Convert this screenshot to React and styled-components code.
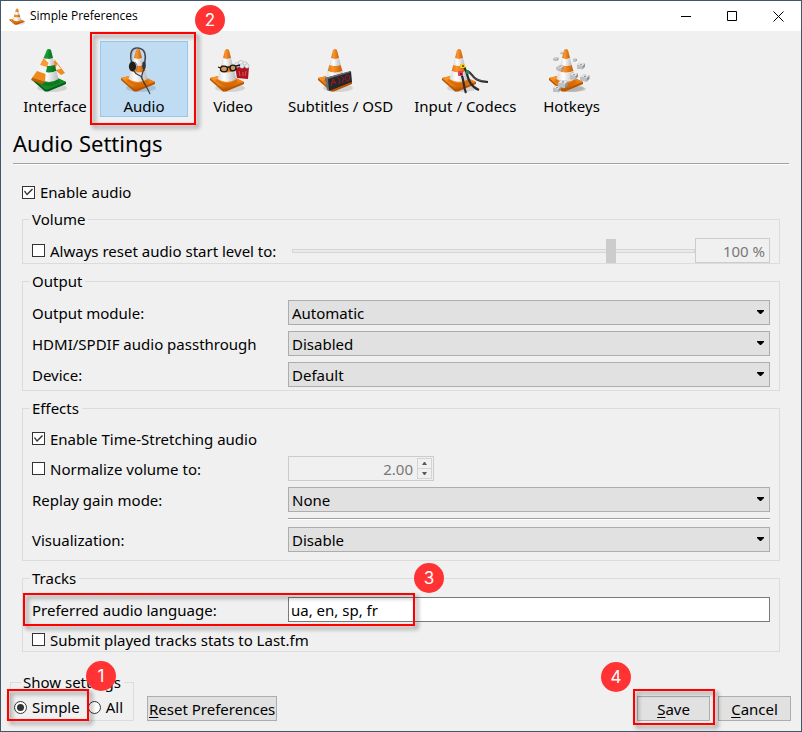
import { useState } from "react";
import styled, { createGlobalStyle } from "styled-components";

const TABS = [
  { id: "interface", label: "Interface" },
  { id: "audio", label: "Audio" },
  { id: "video", label: "Video" },
  { id: "subtitles", label: "Subtitles / OSD" },
  { id: "codecs", label: "Input / Codecs" },
  { id: "hotkeys", label: "Hotkeys" },
];

const OUTPUT_FIELDS = [
  { id: "module", label: "Output module:", value: "Automatic" },
  { id: "passthrough", label: "HDMI/SPDIF audio passthrough", value: "Disabled" },
  { id: "device", label: "Device:", value: "Default" },
];

// centre x, centre y, width
const KEYCAPS = [
  [14, 7, 3],
  [8, 13, 5],
  [27, 14, 4],
  [12, 22, 7],
  [33, 20, 8],
  [26, 30, 8],
  [37, 32, 9],
  [9, 43, 8],
  [15, 38, 10],
];

const ConeDefs = () => (
  <svg width="0" height="0" style={{ position: "absolute" }} aria-hidden="true">
    <defs>
      <linearGradient id="orange">
        <stop offset="0" stopColor="#e07a14" />
        <stop offset="0.35" stopColor="#fb9430" />
        <stop offset="1" stopColor="#c95c00" />
      </linearGradient>
      <linearGradient id="white">
        <stop offset="0" stopColor="#d8d8d8" />
        <stop offset="0.35" stopColor="#ffffff" />
        <stop offset="1" stopColor="#b9b9bd" />
      </linearGradient>
      <linearGradient id="base" x2="0.3" y2="1">
        <stop offset="0" stopColor="#ff9f30" />
        <stop offset="0.7" stopColor="#f08010" />
        <stop offset="1" stopColor="#c25a00" />
      </linearGradient>
      <linearGradient id="green">
        <stop offset="0" stopColor="#1fa03a" />
        <stop offset="1" stopColor="#04701c" />
      </linearGradient>
    </defs>
  </svg>
);

const Cone = ({ body = "url(#orange)", base = "url(#base)", edge = "#b85400" }) => (
  <g>
    <ellipse cx="21" cy="42" rx="15" ry="4" fill="#000" opacity="0.12" />
    <path d="M1 32L18 28L35 36L35 38L17 45.500L14 45.500L1 34Z" fill={edge} />
    <path d="M1 32L18 28L35 36L17 43.500L14 43.500Z" fill={base} />
    <path d="M8 33Q18 41 27 33L29 36Q18 44 6 35Z" fill={edge} opacity="0.4" />
    <path d="M16 4Q18 2 20 4L22 12Q18 14 14 12Z" fill={body} />
    <path d="M14 12Q18 14 22 12L23.700 19Q18 21 12.300 19Z" fill="url(#white)" />
    <path d="M12.300 19Q18 21 23.700 19L25.400 25Q18 28.500 10.600 25Z" fill={body} />
    <path d="M10.600 25Q18 28.500 25.400 25L27.500 33Q18 39 8.500 33Z" fill="url(#white)" />
  </g>
);

const AppIcon = () => (
  <svg width="16" height="17" viewBox="0 2 36 44" preserveAspectRatio="none" aria-hidden="true">
    <Cone />
  </svg>
);

const TabArt = ({ id }) => {
  if (id === "interface") {
    return (
      <>
        <path d="M24 14L34 27L30 29L20 20Z" fill="#f08a1c" />
        <path d="M26 18L30 23L24 24Z" fill="#eee" />
        <Cone body="url(#green)" base="#128a28" edge="#055c14" />
        <path d="M16 4Q17 3 18 3L15.500 13L12.500 12Z" fill="#1a9a35" />
        <path d="M12.500 12L17.500 17L15.500 22L9 19Z" fill="#fb9a35" />
        <path d="M9 19L16 21L14.500 28L6 25Z" fill="#f4f4f4" />
        <path d="M6 25L14.500 28L14 36L1 32Z" fill="#f08a1c" />
        <path d="M1 32L14 36L11 38L0 34Z" fill="#c95c00" />
      </>
    );
  }
  if (id === "audio") {
    return (
      <>
        <Cone />
        <path
          d="M12 18C9 6 12 2 17 2S28 5 24 19"
          fill="none"
          stroke="#41474d"
          strokeWidth="1.600"
        />
        <path d="M12 14C11 6 14 3 18 3" fill="none" stroke="#9aa0a6" strokeWidth="0.700" />
        <path d="M15 16Q19 20 16 25" fill="none" stroke="#777" />
        <ellipse cx="12.500" cy="20.500" rx="3.600" ry="5" fill="#1e1e1e" />
        <ellipse cx="24" cy="19.500" rx="1.800" ry="4" fill="#32363c" />
        <path
          d="M14 25C16 30 21 28 22 32S28 43 30 48M24 23Q21 30 22 33"
          fill="none"
          stroke="#35393e"
          strokeWidth="1.200"
        />
      </>
    );
  }
  if (id === "video") {
    return (
      <>
        <path d="M26 20L40 21L39 33L28 32Z" fill="#b1121d" />
        <path d="M30 25L31 30M34 26L34 30M37 25L36 30" stroke="#c9747b" strokeWidth="0.800" />
        <g fill="#e9eef2" stroke="#9aa5ad" strokeWidth="0.500">
          <circle cx="28" cy="19" r="2.500" />
          <circle cx="32" cy="17" r="2.600" />
          <circle cx="36" cy="18" r="2.400" />
          <circle cx="38" cy="20" r="2.200" />
          <circle cx="33" cy="20" r="2.200" />
        </g>
        <Cone />
        <g fill="#c99a63" stroke="#161616" strokeWidth="1.300">
          <ellipse cx="15" cy="23" rx="3.500" ry="2.800" />
          <ellipse cx="24" cy="22" rx="3" ry="2.800" />
          <path d="M18.500 22Q20 20 21 21.500M27 20L31 19M11.500 22L9 21" fill="none" />
        </g>
      </>
    );
  }
  if (id === "subtitles") {
    return (
      <>
        <Cone />
        <path d="M8 32L34 25L35 36L12 45Z" fill="#25272b" />
        <path d="M8 32L34 25L34 26L11 33L12 45L10 44Z" fill="#6b6e73" />
        <g fill="none" stroke="#b31420" strokeWidth="0.900">
          <path d="M14 40L16 33L19 38M15 37L18 36" />
          <path d="M20 31L23 34L22 38M24 30L27 33L25 37" />
          <ellipse cx="30.500" cy="32" rx="2" ry="3.200" />
        </g>
      </>
    );
  }
  if (id === "codecs") {
    return (
      <>
        <Cone />
        <g fill="none" stroke="#2b2b2b" strokeWidth="2.200">
          <path d="M22 20C28 25 24 38 38 44" />
          <path d="M20 28C23 32 22 40 25 47" />
          <path d="M26 25C33 27 29 35 47 36" />
        </g>
        <path d="M27 26C32 28 30 34 44 35" fill="none" stroke="#777" strokeWidth="0.600" />
        <rect x="19" y="18" width="5" height="4" rx="1" fill="#f1cf12" />
        <rect x="21" y="19" width="2" height="2" fill="#7a6500" />
        <rect x="17" y="25" width="5" height="5" rx="1" fill="#e33f67" />
        <rect x="19" y="27" width="2" height="2" fill="#7d1631" />
        <rect x="25" y="24" width="3" height="4" rx="1" fill="#1c8f4a" />
      </>
    );
  }
  return (
    <>
      <ellipse cx="24" cy="43" rx="14" ry="3" fill="#000" opacity="0.15" />
      <Cone />
      {KEYCAPS.map(([x, y, size]) => (
        <g
          key={`${x}-${y}`}
          transform={`translate(${x} ${y}) scale(${size / 10}) translate(-5 -4)`}
        >
          <path d="M0 3L3 0L10 1L10 5L7 8L0 7Z" fill="#8f9396" />
          <path d="M0 3L3 0L10 1L7 4Z" fill="#e6e7e8" />
          <path d="M0 3L7 4L7 8L0 7Z" fill="#bfc2c4" />
          <path d="M4 1.500L6 1.500L6 2.500L4 2.500Z" fill="#73777a" />
        </g>
      ))}
    </>
  );
};

const Dropdown = ({ id, value }) => (
  <SelectBox>
    <Select id={id} defaultValue={value}>
      <option>{value}</option>
    </Select>
    <Caret width="7" height="4" viewBox="0 0 7 4" aria-hidden="true">
      <path d="M0 0H7V1L4 4H3L0 1Z" fill="#000" />
    </Caret>
  </SelectBox>
);

const App = () => {
  const [tab, setTab] = useState("audio");

  return (
    <>
      <GlobalStyle />
      <ConeDefs />
      <Window>
        <TitleBar>
          <AppIcon />
          <Title>Simple Preferences</Title>
          <WindowButton aria-label="Minimize">
            <svg width="11" height="11" stroke="#000">
              <path d="M0 5.500H10" />
            </svg>
          </WindowButton>
          <WindowButton aria-label="Maximize">
            <svg width="11" height="11" stroke="#000" fill="none">
              <path d="M0.500 0.500H9.500V9.500H0.500Z" />
            </svg>
          </WindowButton>
          <WindowButton aria-label="Close">
            <svg width="11" height="11" stroke="#000">
              <path d="M0.500 0.500L10.500 10.500M10.500 0.500L0.500 10.500" />
            </svg>
          </WindowButton>
        </TitleBar>

        <Toolbar>
          {TABS.map(({ id, label }) => (
            <TabSlot key={id}>
              <TabButton $active={tab === id} onClick={() => setTab(id)}>
                <TabIcon width="48" height="48" viewBox="0 0 48 48" aria-hidden="true">
                  <TabArt id={id} />
                </TabIcon>
                {label}
              </TabButton>
              {id === "audio" && (
                <>
                  <TabMark />
                  <Badge $left="95px" $top="-36px">
                    2
                  </Badge>
                </>
              )}
            </TabSlot>
          ))}
        </Toolbar>

        <Heading>Audio Settings</Heading>

        <Panel>
          <CheckLabel>
            <Checkbox type="checkbox" defaultChecked />
            Enable audio
          </CheckLabel>

          <Group>
            <Legend>Volume</Legend>
            <Row>
              <CheckLabel>
                <Checkbox type="checkbox" />
                Always reset audio start level to:
              </CheckLabel>
              <VolumeControls>
                <Slider
                  type="range"
                  min="0"
                  max="125"
                  defaultValue="100"
                  aria-label="Start level"
                  disabled
                />
                <VolumeInput defaultValue="100 %" aria-label="Start level percent" disabled />
              </VolumeControls>
            </Row>
          </Group>

          <Group $bottom="3px">
            <Legend>Output</Legend>
            {OUTPUT_FIELDS.map(({ id, label, value }) => (
              <Row key={id}>
                <label htmlFor={id}>{label}</label>
                <Dropdown id={id} value={value} />
              </Row>
            ))}
          </Group>

          <Group $bottom="8px">
            <Legend>Effects</Legend>
            <CheckRow>
              <CheckLabel>
                <Checkbox type="checkbox" defaultChecked />
                Enable Time-Stretching audio
              </CheckLabel>
            </CheckRow>
            <Row>
              <CheckLabel>
                <Checkbox type="checkbox" />
                Normalize volume to:
              </CheckLabel>
              <SpinBox>
                <SpinInput defaultValue="2.00" aria-label="Normalize volume" disabled />
                <Stepper>
                  <StepButton aria-label="Increase" disabled>
                    <svg width="5" height="3" viewBox="0 0 5 3">
                      <path d="M0 3L2 0H3L5 3Z" fill="#5a5a5a" />
                    </svg>
                  </StepButton>
                  <StepButton aria-label="Decrease" disabled>
                    <svg width="5" height="3" viewBox="0 0 5 3">
                      <path d="M0 0L2 3H3L5 0Z" fill="#5a5a5a" />
                    </svg>
                  </StepButton>
                </Stepper>
              </SpinBox>
            </Row>
            <Row>
              <label htmlFor="gain">Replay gain mode:</label>
              <Dropdown id="gain" value="None" />
            </Row>
            <Divider />
            <Row>
              <label htmlFor="visualization">Visualization:</label>
              <Dropdown id="visualization" value="Disable" />
            </Row>
          </Group>

          <Group>
            <Legend>Tracks</Legend>
            <Row>
              <label htmlFor="language">Preferred audio language:</label>
              <TextInput id="language" defaultValue="ua, en, sp, fr" />
              <LanguageMark />
              <Badge $left="382px" $top="-34px">
                3
              </Badge>
            </Row>
            <CheckRow>
              <CheckLabel>
                <Checkbox type="checkbox" />
                Submit played tracks stats to Last.fm
              </CheckLabel>
            </CheckRow>
          </Group>
        </Panel>

        <Footer>
          <ModeGroup>
            <ModeLegend>Show settings</ModeLegend>
            <ModeRow>
              <CheckLabel>
                <Radio type="radio" name="mode" defaultChecked />
                Simple
              </CheckLabel>
              <CheckLabel>
                <Radio type="radio" name="mode" />
                All
              </CheckLabel>
            </ModeRow>
            <ModeMark />
            <Badge $left="75px" $top="-31px">
              1
            </Badge>
          </ModeGroup>
          <PushButton>
            <u>R</u>eset Preferences
          </PushButton>
          <Actions>
            <SaveSlot>
              <PushButton $wide>
                <u>S</u>ave
              </PushButton>
              <SaveMark />
              <Badge $left="-36px" $top="-34px">
                4
              </Badge>
            </SaveSlot>
            <PushButton $wide>
              <u>C</u>ancel
            </PushButton>
          </Actions>
        </Footer>
      </Window>
    </>
  );
};

export default App;

const GlobalStyle = createGlobalStyle`
  * {
    box-sizing: border-box;
  }

  body {
    margin: 0;

    background-color: #f0f0f0;

    color: #000;
    font-family: "Noto Sans", "Open Sans", sans-serif;
    font-size: 15px;
    line-height: 20px;
  }

  button,
  input,
  select {
    margin: 0;

    color: inherit;
    font: inherit;
  }

  svg {
    display: block;
  }
`;

const Window = styled.main`
  display: flex;
  flex-direction: column;

  min-height: 100vh;

  border: 1px solid #43576b;
`;

const TitleBar = styled.header`
  display: flex;
  align-items: center;

  height: 30px;
  padding-left: 8px;

  background-color: white;
`;

const Title = styled.span`
  flex: 1;

  margin-left: 5px;

  font-family: "Open Sans", "Noto Sans", sans-serif;
  font-size: 12px;
  line-height: 18px;
`;

const WindowButton = styled.button`
  display: flex;
  align-items: center;
  justify-content: center;

  width: 46px;
  height: 30px;
  padding: 0;

  border: none;
  background-color: transparent;

  &:hover {
    background-color: #e5e5e5;
  }
`;

const Toolbar = styled.nav`
  display: flex;
  column-gap: 1px;

  padding: 10px 10px 0;
`;

const TabSlot = styled.div`
  position: relative;
`;

const TabButton = styled.button`
  display: flex;
  flex-direction: column;
  align-items: center;

  min-width: 88px;
  height: 76px;
  padding: 4px 9px 0;

  border: 1px solid ${({ $active }) => ($active ? "#90c8f6" : "transparent")};
  background-color: ${({ $active }) => ($active ? "#c0dcf3" : "transparent")};

  white-space: nowrap;
`;

const TabIcon = styled.svg`
  flex-shrink: 0;

  margin-bottom: 2px;

  overflow: visible;
`;

const Mark = styled.span`
  position: absolute;
  z-index: 1;

  border: 2px solid #fe0000;
  filter: drop-shadow(3px 3px 2px rgba(0, 0, 0, 0.45));

  pointer-events: none;
`;

const TabMark = styled(Mark)`
  inset: -9px -8px -8px -10px;
`;

const LanguageMark = styled(Mark)`
  top: -4px;
  left: -9px;

  width: 392px;
  height: 33px;
`;

const ModeMark = styled(Mark)`
  bottom: -1px;
  left: -4px;

  width: 82px;
  height: 32px;
`;

const SaveMark = styled(Mark)`
  inset: -7px -5px -4px -4px;
`;

const Badge = styled.span`
  display: flex;
  align-items: center;
  justify-content: center;

  position: absolute;
  top: ${({ $top }) => $top};
  left: ${({ $left }) => $left};
  z-index: 2;

  width: 30px;
  height: 30px;

  border-radius: 50%;
  background-color: #ff3333;

  color: white;
  font-family: Inter, sans-serif;
  font-size: 17px;
`;

const Heading = styled.h1`
  margin: 12px 12px 0;
  padding-bottom: 6px;

  border-bottom: 1px solid #a0a0a0;
  box-shadow: 0 1px 0 white;

  font-size: 22px;
  font-weight: 400;
  line-height: 28px;
`;

const Panel = styled.section`
  display: flex;
  flex-direction: column;
  row-gap: 7px;

  margin: 18px 21px 16px;
`;

const Group = styled.fieldset`
  display: grid;
  row-gap: 6px;

  min-width: 0;
  margin: 0;
  padding: 9px 9px ${({ $bottom }) => $bottom || "0"};

  border: 1px solid #dcdcdc;
`;

const Legend = styled.legend`
  height: 20px;
  padding: 0 3px 0 2px;
  margin-left: -2px;
`;

const Row = styled.div`
  display: grid;
  grid-template-columns: 256px minmax(0, 1fr);
  align-items: center;

  position: relative;

  height: 25px;
`;

const CheckRow = styled.div`
  display: flex;
  align-items: center;

  height: 23px;
`;

const CheckLabel = styled.label`
  display: flex;
  align-items: center;
  column-gap: 5px;

  white-space: nowrap;
`;

const Checkbox = styled.input`
  flex-shrink: 0;

  width: 13px;
  height: 13px;

  appearance: none;
  border: 1px solid #333;
  background-color: white;

  &:checked::before {
    content: "";
    display: block;

    width: 11px;
    height: 11px;

    background-color: #333;
    clip-path: polygon(1px 5px, 2px 4px, 4px 7px, 9px 2px, 10px 3px, 4px 9px);
  }
`;

const Radio = styled(Checkbox)`
  border-radius: 50%;

  &:checked::before {
    width: 7px;
    height: 7px;
    margin: 2px;

    border-radius: 50%;
    clip-path: none;
  }
`;

const VolumeControls = styled.div`
  display: flex;

  padding-left: 4px;
`;

const Slider = styled.input`
  flex: 1;

  min-width: 0;
  height: 25px;

  appearance: none;
  background-color: transparent;

  &::-webkit-slider-runnable-track {
    height: 4px;

    border: 1px solid #d6d6d6;
    background-color: #e7eaea;
  }

  &::-webkit-slider-thumb {
    width: 10px;
    height: 24px;
    margin-top: -11px;

    appearance: none;
    background-color: #cccccc;
  }
`;

const TextInput = styled.input`
  width: 100%;
  min-width: 0;
  height: 25px;
  padding: 0 2px;

  border: 1px solid #7a7a7a;
  border-radius: 0;
  background-color: white;

  &:disabled {
    border-color: #cccccc;
    background-color: #f0f0f0;

    color: #787878;
    text-align: right;
  }
`;

const VolumeInput = styled(TextInput)`
  width: 75px;
  padding-right: 4px;
`;

const SpinBox = styled.div`
  position: relative;

  width: 146px;
`;

const SpinInput = styled(TextInput)`
  display: block;

  padding-right: 20px;
`;

const Stepper = styled.div`
  display: flex;
  flex-direction: column;

  position: absolute;
  top: 2px;
  right: 2px;

  width: 15px;
`;

const StepButton = styled.button`
  display: flex;
  align-items: center;
  justify-content: center;

  height: 11px;
  padding: 0;

  border: 1px solid #d4d4d4;
  background-color: #f0f0f0;

  & + & {
    height: 10px;

    border-top: none;
  }
`;

const SelectBox = styled.div`
  position: relative;
`;

const Select = styled.select`
  display: block;

  width: 100%;
  height: 25px;
  padding: 0 24px 0 3px;

  appearance: none;
  border: 1px solid #adadad;
  border-radius: 0;
  background-color: #e1e1e1;
`;

const Caret = styled.svg`
  position: absolute;
  top: 10px;
  right: 6px;

  pointer-events: none;
`;

const Divider = styled.hr`
  width: calc(100% - 256px);
  height: 2px;
  margin: 0 0 1px 256px;

  border: none;
  border-top: 1px solid #a0a0a0;
  background-color: white;
`;

const Footer = styled.footer`
  display: flex;
  align-items: flex-end;

  margin-top: auto;
  padding: 0 10px 10px 9px;
`;

const ModeGroup = styled.fieldset`
  position: relative;

  width: 124px;
  height: 49px;
  margin: 0 13px 0 0;
  padding: 5px 3px 0;

  border: 1px solid #dcdcdc;
`;

const ModeLegend = styled(Legend)`
  margin-left: 7px;

  white-space: nowrap;
`;

const ModeRow = styled.div`
  display: flex;
  column-gap: 8px;
`;

const PushButton = styled.button`
  width: ${({ $wide }) => ($wide ? "73px" : "auto")};
  height: 25px;
  padding: 0 1px;

  border: 1px solid #adadad;
  background-color: #e1e1e1;

  white-space: nowrap;

  &:hover {
    border-color: #0078d7;
    background-color: #e5f1fb;
  }

  u {
    text-underline-offset: 2px;
  }
`;

const Actions = styled.div`
  display: flex;
  column-gap: 8px;

  margin-left: auto;
`;

const SaveSlot = styled.div`
  position: relative;
`;
